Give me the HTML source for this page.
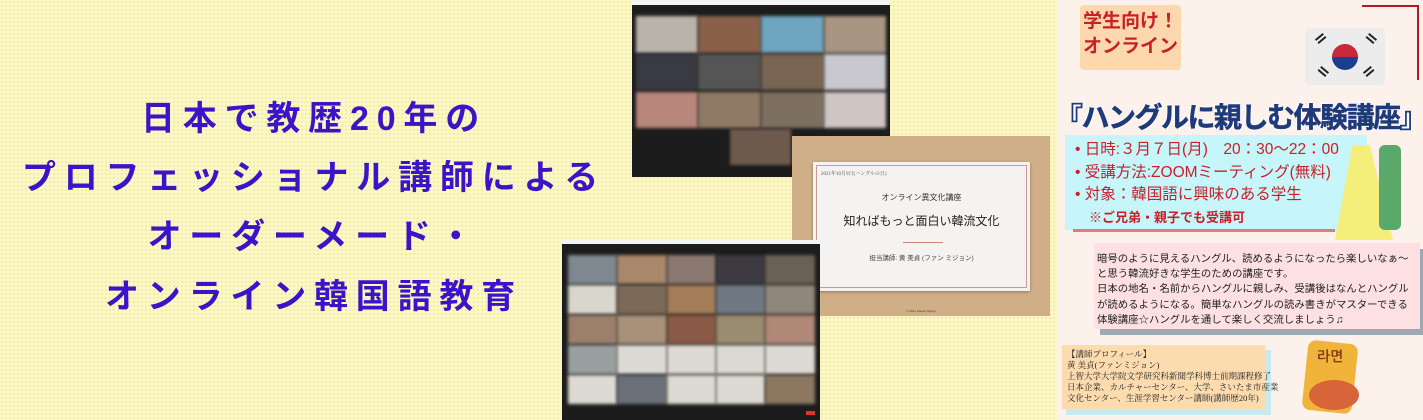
<!DOCTYPE html>
<html><head><meta charset="utf-8"><style>
*{margin:0;padding:0;box-sizing:border-box}
body{width:1423px;height:420px;overflow:hidden;position:relative;background:#fdf9c6;font-family:"Liberation Sans","Noto Sans CJK JP",sans-serif}
.bg{position:absolute;left:0;top:0;width:1057px;height:420px;background:#fcf8c4;background-image:radial-gradient(#efe6a8 0.8px,transparent 1px);background-size:4px 4px}
.lt{position:absolute;left:4px;width:620px;text-align:center;color:#3b14c8;font-weight:bold;font-size:34px;letter-spacing:7.8px;line-height:40px;white-space:nowrap}
.abs{position:absolute}
.zoom{background:#1c1c1c}
.t{position:absolute;filter:blur(1.5px)}
.poster{position:absolute;left:1057px;top:0;width:366px;height:420px;background:#fdf1ec;overflow:hidden}
.red{color:#c8202a}
</style></head><body>
<div class="bg"></div>
<div class="lt" style="top:99px">日本で教歴20年の</div>
<div class="lt" style="top:158px">プロフェッショナル講師による</div>
<div class="lt" style="top:217px">オーダーメード・</div>
<div class="lt" style="top:277px">オンライン韓国語教育</div>

<!-- top zoom -->
<div class="abs zoom" style="left:632px;top:0;width:258px;height:177px">
 <div class="abs" style="left:0;top:0;width:258px;height:5px;background:#f4f4f4"></div>
 <div class="t" style="left:4px;top:16px;width:62px;height:37px;background:#b9b3aa"></div>
 <div class="t" style="left:66px;top:16px;width:63px;height:37px;background:#8a6048"></div>
 <div class="t" style="left:129px;top:16px;width:63px;height:37px;background:#6fa5c0"></div>
 <div class="t" style="left:192px;top:16px;width:62px;height:37px;background:#a89682"></div>
 <div class="t" style="left:4px;top:54px;width:62px;height:36px;background:#3a3a44"></div>
 <div class="t" style="left:66px;top:54px;width:63px;height:36px;background:#555"></div>
 <div class="t" style="left:129px;top:54px;width:63px;height:36px;background:#7a6452"></div>
 <div class="t" style="left:192px;top:54px;width:62px;height:36px;background:#c9c8d0"></div>
 <div class="t" style="left:4px;top:92px;width:62px;height:36px;background:#b8867a"></div>
 <div class="t" style="left:66px;top:92px;width:63px;height:36px;background:#8f7a66"></div>
 <div class="t" style="left:129px;top:92px;width:63px;height:36px;background:#7d7060"></div>
 <div class="t" style="left:192px;top:92px;width:62px;height:36px;background:#cfc6c4"></div>
 <div class="t" style="left:98px;top:129px;width:61px;height:36px;background:#6e5a4c"></div>
</div>
<!-- slide -->
<div class="abs" style="left:792px;top:136px;width:258px;height:180px;background:#cfae88">
 <div class="abs" style="left:21px;top:26px;width:217px;height:129px;background:#f4f3f1;box-shadow:0 1px 3px rgba(0,0,0,.3)">
  <div class="abs" style="left:3px;top:3px;right:3px;bottom:3px;border:1px solid #c89a90"></div>
  <div class="abs" style="left:8px;top:8px;font-size:5px;color:#555;font-family:'Liberation Serif','Noto Serif CJK SC',serif">2021年10月9日(ハングルの日)</div>
  <div class="abs" style="left:0;width:100%;top:30px;text-align:center;font-size:8px;color:#333">オンライン異文化講座</div>
  <div class="abs" style="left:0;width:100%;top:50px;text-align:center;font-size:12px;color:#222">知ればもっと面白い韓流文化</div>
  <div class="abs" style="left:90px;top:80px;width:40px;height:1px;background:#c8846c"></div>
  <div class="abs" style="left:0;width:100%;top:90px;text-align:center;font-size:6.5px;color:#444">担当講師: 黄 美貞 (ファン ミジョン)</div>
 </div>
 <div class="abs" style="left:0;width:100%;top:173px;text-align:center;font-size:3px;color:#444">© 2021 Hwang Mijung</div>
</div>
<!-- bottom zoom -->
<div class="abs zoom" style="left:562px;top:240px;width:258px;height:180px">
 <div class="abs" style="left:0;top:0;width:258px;height:4px;background:#f4f4f4"></div>
 <div class="t" style="left:6px;top:15px;width:49px;height:29px;background:#7d8890"></div>
 <div class="t" style="left:55px;top:15px;width:50px;height:29px;background:#a8876a"></div>
 <div class="t" style="left:105px;top:15px;width:49px;height:29px;background:#8a7870"></div>
 <div class="t" style="left:154px;top:15px;width:49px;height:29px;background:#3d3a40"></div>
 <div class="t" style="left:203px;top:15px;width:50px;height:29px;background:#6b6056"></div>
 <div class="t" style="left:6px;top:45px;width:49px;height:29px;background:#d9d6cd"></div>
 <div class="t" style="left:55px;top:45px;width:50px;height:29px;background:#7c6a58"></div>
 <div class="t" style="left:105px;top:45px;width:49px;height:29px;background:#a47e58"></div>
 <div class="t" style="left:154px;top:45px;width:49px;height:29px;background:#707884"></div>
 <div class="t" style="left:203px;top:45px;width:50px;height:29px;background:#90877c"></div>
 <div class="t" style="left:6px;top:75px;width:49px;height:29px;background:#9c806c"></div>
 <div class="t" style="left:55px;top:75px;width:50px;height:29px;background:#a8907a"></div>
 <div class="t" style="left:105px;top:75px;width:49px;height:29px;background:#8a5a46"></div>
 <div class="t" style="left:154px;top:75px;width:49px;height:29px;background:#9a8c70"></div>
 <div class="t" style="left:203px;top:75px;width:50px;height:29px;background:#b08878"></div>
 <div class="t" style="left:6px;top:105px;width:49px;height:29px;background:#9aa0a0"></div>
 <div class="t" style="left:55px;top:105px;width:50px;height:29px;background:#dcdad2"></div>
 <div class="t" style="left:105px;top:105px;width:49px;height:29px;background:#dcdad2"></div>
 <div class="t" style="left:154px;top:105px;width:49px;height:29px;background:#dcdad2"></div>
 <div class="t" style="left:203px;top:105px;width:50px;height:29px;background:#dcdad2"></div>
 <div class="t" style="left:6px;top:135px;width:49px;height:29px;background:#dcdad2"></div>
 <div class="t" style="left:55px;top:135px;width:50px;height:29px;background:#6a7078"></div>
 <div class="t" style="left:105px;top:135px;width:49px;height:29px;background:#dcdad2"></div>
 <div class="t" style="left:154px;top:135px;width:49px;height:29px;background:#dcdad2"></div>
 <div class="t" style="left:203px;top:135px;width:50px;height:29px;background:#8c7860"></div>
 <div class="abs" style="left:244px;top:171px;width:9px;height:4px;background:#d33"></div>
</div>

<!-- poster -->
<div class="poster">
 <div class="abs" style="left:23px;top:5px;width:101px;height:65px;background:#fcd8ac;border-radius:4px"></div>
 <div class="abs red" style="left:23px;top:9px;width:101px;text-align:center;font-weight:bold;font-size:19px;line-height:25px">学生向け！<br>オンライン</div>
 <div class="abs" style="left:248px;top:28px;width:80px;height:57px;background:#ececec;border-radius:5px"></div>
 <div class="abs" style="left:275px;top:44px;width:26px;height:26px;border-radius:50%;background:linear-gradient(#c8283a 50%,#1c3f8c 50%)"></div>
 <div class="abs" style="left:260px;top:35px;width:10px;height:10px;border-top:6px double #222;transform:rotate(-40deg)"></div>
 <div class="abs" style="left:308px;top:35px;width:10px;height:10px;border-top:6px double #222;transform:rotate(40deg)"></div>
 <div class="abs" style="left:260px;top:68px;width:10px;height:10px;border-top:6px double #222;transform:rotate(40deg)"></div>
 <div class="abs" style="left:308px;top:68px;width:10px;height:10px;border-top:6px double #222;transform:rotate(-40deg)"></div>
 <div class="abs" style="left:305px;top:5px;width:57px;height:75px;border-top:2px solid #b01c20;border-right:2px solid #b01c20"></div>
 <div class="abs" style="left:-2px;top:96px;width:370px;text-align:center;font-weight:bold;font-size:28px;color:#1f3a7a;letter-spacing:-1.5px;-webkit-text-stroke:0.5px #1f3a7a;text-shadow:1px 1px 0 #fff,-1px -1px 0 #fff">『ハングルに親しむ体験講座』</div>
 <div class="abs" style="left:8px;top:135px;width:302px;height:95px;background:#c6f6fa"></div>
 <div class="abs" style="left:16px;top:229px;width:262px;height:3px;background:#e07a82"></div>
 <div class="abs" style="left:278px;top:145px;width:58px;height:95px;background:#f4ee7a;clip-path:polygon(30% 0,60% 0,100% 100%,0 100%)"></div>
 <div class="abs" style="left:322px;top:145px;width:22px;height:85px;background:#5aa86a;border-radius:6px"></div>
 <div class="abs red" style="left:18px;top:139px;font-size:15.5px;line-height:22.5px;white-space:nowrap">• 日時:３月７日(月)　20：30〜22：00<br>• 受講方法:ZOOMミーティング(無料)<br>• 対象：韓国語に興味のある学生</div>
 <div class="abs red" style="left:32px;top:207px;font-size:13px;font-weight:bold">※ご兄弟・親子でも受講可</div>
 <div class="abs" style="left:43px;top:249px;width:326px;height:86px;background:#a0a8b4"></div>
 <div class="abs" style="left:37px;top:243px;width:326px;height:86px;background:#fde0e2"></div>
 <div class="abs" style="left:40px;top:252px;font-size:10.4px;line-height:15.2px;color:#222;white-space:nowrap">暗号のように見えるハングル、読めるようになったら楽しいなぁ〜<br>と思う韓流好きな学生のための講座です。<br>日本の地名・名前からハングルに親しみ、受講後はなんとハングル<br>が読めるようになる。簡単なハングルの読み書きがマスターできる<br>体験講座☆ハングルを通して楽しく交流しましょう♫</div>
 <div class="abs" style="left:9px;top:350px;width:205px;height:65px;background:#c6eaee"></div>
 <div class="abs" style="left:5px;top:345px;width:203px;height:64px;background:#fcdcae"></div>
 <div class="abs" style="left:10px;top:349px;font-size:8.5px;line-height:11px;color:#222;white-space:nowrap;font-family:'Liberation Serif','Noto Serif CJK SC',serif">【講師プロフィール】<br>黄 美貞(ファンミジョン)<br>上智大学大学院文学研究科新聞学科博士前期課程修了<br>日本企業、カルチャーセンター、大学、さいたま市産業<br>文化センター、生涯学習センター講師(講師歴20年)</div>
 <div class="abs" style="left:248px;top:342px;width:50px;height:70px;background:#f1b43a;border-radius:8px;transform:rotate(6deg)"></div>
 <div class="abs" style="left:252px;top:380px;width:50px;height:30px;background:#d8643a;border-radius:50%"></div>
 <div class="abs" style="left:260px;top:350px;font-size:14px;font-weight:bold;color:#8a3a10;font-family:'NanumGothic',sans-serif">라면</div>
</div>
</body></html>
